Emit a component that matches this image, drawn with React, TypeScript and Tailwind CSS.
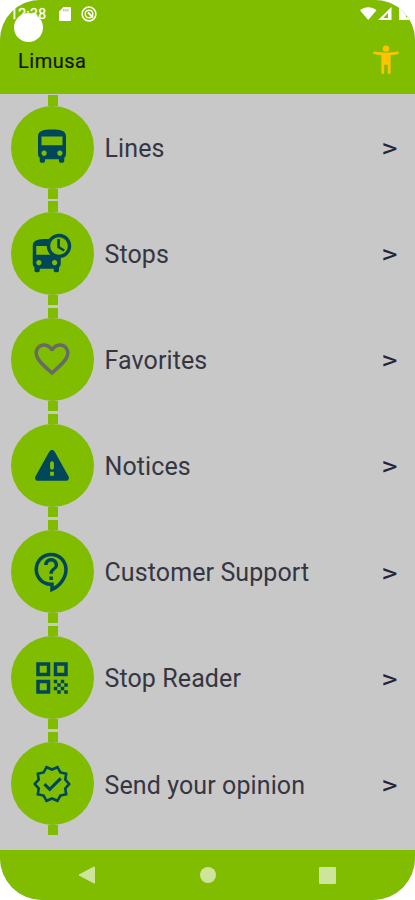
import React from "react";
import {
  MdDepartureBoard,
  MdDirectionsBus,
  MdFavoriteBorder,
  MdOutlineContactSupport,
  MdQrCode,
} from "react-icons/md";

type IconProps = { className?: string };

function WarningIcon({ className }: IconProps) {
  return (
    <svg viewBox="0 0 24 24" fill="currentColor" className={className}>
      <path
        fillRule="evenodd"
        d="M4.1 21h15.8c1.5 0 2.2-1.4 1.5-2.6L13.5 4.3c-.7-1.2-2.3-1.2-3 0L2.6 18.4C1.9 19.6 2.6 21 4.1 21zM12 14.7c-.65 0-1.1-.5-1.1-1.1v-2.7c0-.6.45-1.1 1.1-1.1s1.1.5 1.1 1.1v2.7c0 .6-.45 1.1-1.1 1.1zm1.1 3.4h-2.2v-2.2h2.2v2.2z"
      />
    </svg>
  );
}

function OpinionIcon({ className }: IconProps) {
  return (
    <svg viewBox="0 0 24 24" fill="none" stroke="currentColor" strokeWidth="1.5" className={className}>
      <path d="M21.8 12l-2.2-2.5.5-3.400-3.300-.700-1.700-3L12 3.700 8.900 2.400 7.200 5.400l-3.300.700.5 3.400L2.200 12l2.200 2.500-.5 3.400 3.300.700 1.700 3L12 20.300l3.100 1.300 1.700-3 3.300-.700-.5-3.400z" />
      <path d="M7.700 12.100l3 3L17 8.800" strokeWidth="1.700" />
    </svg>
  );
}

const items = [
  { name: "Lines", icon: MdDirectionsBus, color: "text-[#00475a]" },
  { name: "Stops", icon: MdDepartureBoard, color: "text-[#00475a]" },
  { name: "Favorites", icon: MdFavoriteBorder, color: "text-[#666b66]" },
  { name: "Notices", icon: WarningIcon, color: "text-[#00475a]" },
  { name: "Customer Support", icon: MdOutlineContactSupport, color: "text-[#00475a]" },
  { name: "Stop Reader", icon: MdQrCode, color: "text-[#00475a]" },
  { name: "Send your opinion", icon: OpinionIcon, color: "text-[#00475a]" },
];

function StatusBar() {
  return (
    <div className="relative flex h-[27px] items-center justify-between pl-[10px] text-white">
      <div className="flex items-center">
        <span className="w-[37px] text-[14px] leading-none tracking-[0.3px] [-webkit-text-stroke:0.3px]">12:38</span>
        <svg viewBox="0 0 12 14" className="ml-[12px] h-[14px] w-[12px]" fill="currentColor">
          <path
            fillRule="evenodd"
            d="M4.5 0H11a1 1 0 0 1 1 1v12a1 1 0 0 1-1 1H1a1 1 0 0 1-1-1V4.5zM4.5 2v2.5h.8V2zm2 0v2.5h.8V2zm2 0v2.5h.8V2z"
          />
        </svg>
        <svg viewBox="0 0 16 16" className="ml-[10px] size-[16px]" fill="none" stroke="currentColor">
          <circle cx="8" cy="8" r="6.9" strokeWidth="1.5" />
          <circle cx="8" cy="8" r="3.8" strokeWidth="1.5" />
          <path d="M7 6.5l5 5" strokeWidth="1.8" />
        </svg>
      </div>
      <svg viewBox="0 0 55 16" className="h-[16px] w-[55px]" fill="currentColor">
        <path d="M0 4.2C4.5.2 12 .2 16.5 4.2L8.2 14z" />
        <path fillRule="evenodd" d="M31.5 1v13H18zM28 7v5h-4.8z" />
        <path d="M39 1h7v10h3v3H39z" />
      </svg>
      <div className="absolute top-[13px] left-[14px] size-[29px] rounded-full bg-white" />
    </div>
  );
}

function Header() {
  return (
    <header className="h-[94px] bg-[#80bc00]">
      <StatusBar />
      <div className="flex h-[67px] items-center justify-between pr-[16px] pl-[18px]">
        <h1 className="text-[20px] tracking-[0.5px] text-[#101806] [-webkit-text-stroke:0.2px]">Limusa</h1>
        <svg viewBox="0 0 26 30" className="mb-[1px] h-[30px] w-[26px] text-[#ffc400]" fill="currentColor">
          <circle cx="13" cy="3.6" r="3.2" />
          <path d="M.8 6.3c4 1.1 8 1.4 12.2 1.4s8.2-.3 12.2-1.4l.6 2.5c-2.8.8-5.7 1.2-8.2 1.4v18.6h-2.8v-9h-3.6v9H8.4V10.2C5.9 10 3 9.6.2 8.8z" />
        </svg>
      </div>
    </header>
  );
}

export default function App() {
  return (
    <div className="h-[900px] w-[415px] bg-white font-['Roboto',sans-serif]">
      <div className="flex h-full flex-col overflow-hidden rounded-t-[40px] rounded-b-[42px] bg-[#c8c8c8]">
        <Header />
        <main className="flex flex-1 flex-col gap-[2.7px] pt-[1.3px]">
          {items.map((item) => (
            <a key={item.name} href="#" className="flex h-[103.45px] items-center pr-[17px] pl-[11px]">
              <div className="flex h-full w-[83px] flex-col items-center">
                <div className="w-[10px] flex-1 bg-[#80bc00]" />
                <div className="flex size-[83px] items-center justify-center rounded-full bg-[#80bc00]">
                  <item.icon className={`mr-[1px] size-[42px] ${item.color}`} />
                </div>
                <div className="w-[10px] flex-1 bg-[#80bc00]" />
              </div>
              <span className="mt-[3px] ml-[10.5px] flex-1 text-[25px] tracking-[0.1px] text-[#363642]">
                {item.name}
              </span>
              <span className="mt-[3px] origin-right scale-x-120 text-[26px] text-[#24243a]">&gt;</span>
            </a>
          ))}
        </main>
        <nav className="flex h-[50px] items-center bg-[#80bc00] text-[#cce59b]">
          <svg viewBox="0 0 16 18" className="ml-[79px] h-[18px] w-[16px]" fill="currentColor">
            <path d="M15 .5a1 1 0 0 1 1 1v15a1 1 0 0 1-1.5.8L.8 10a1 1 0 0 1 0-2L14.5.7z" />
          </svg>
          <div className="ml-[105px] size-[16px] rounded-full bg-current" />
          <div className="ml-[103px] size-[17px] rounded-[1px] bg-current" />
        </nav>
      </div>
    </div>
  );
}
